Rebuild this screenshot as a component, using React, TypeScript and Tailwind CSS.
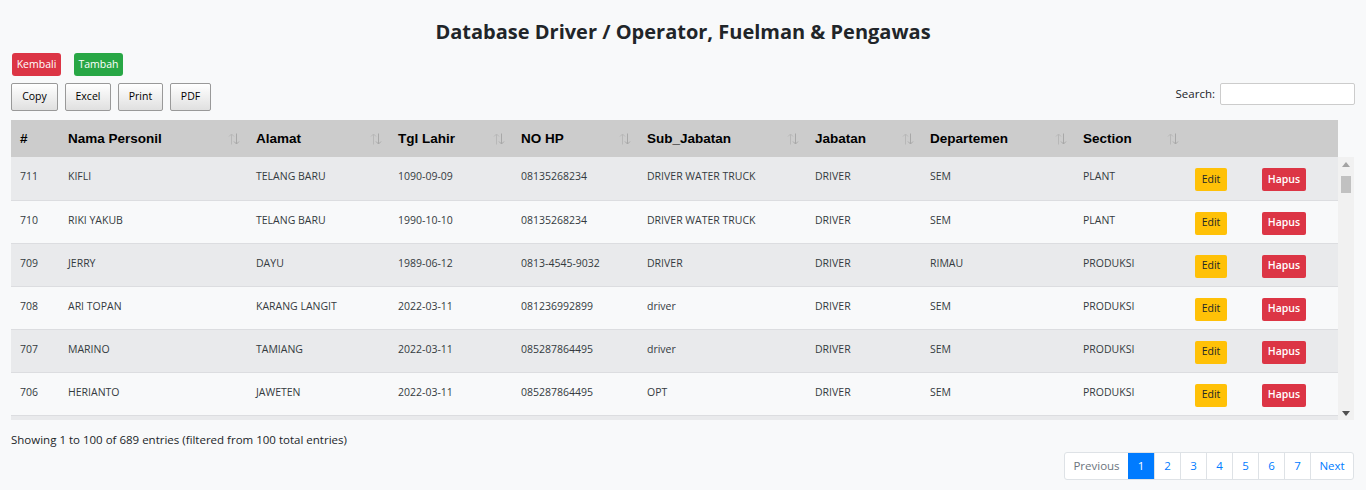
import React from "react";

type Row = {
  id: number;
  nama: string;
  alamat: string;
  lahir: string;
  hp: string;
  sub: string;
  jabatan: string;
  dept: string;
  section: string;
};

const rows: Row[] = [
  { id: 711, nama: "KIFLI", alamat: "TELANG BARU", lahir: "1090-09-09", hp: "08135268234", sub: "DRIVER WATER TRUCK", jabatan: "DRIVER", dept: "SEM", section: "PLANT" },
  { id: 710, nama: "RIKI YAKUB", alamat: "TELANG BARU", lahir: "1990-10-10", hp: "08135268234", sub: "DRIVER WATER TRUCK", jabatan: "DRIVER", dept: "SEM", section: "PLANT" },
  { id: 709, nama: "JERRY", alamat: "DAYU", lahir: "1989-06-12", hp: "0813-4545-9032", sub: "DRIVER", jabatan: "DRIVER", dept: "RIMAU", section: "PRODUKSI" },
  { id: 708, nama: "ARI TOPAN", alamat: "KARANG LANGIT", lahir: "2022-03-11", hp: "081236992899", sub: "driver", jabatan: "DRIVER", dept: "SEM", section: "PRODUKSI" },
  { id: 707, nama: "MARINO", alamat: "TAMIANG", lahir: "2022-03-11", hp: "085287864495", sub: "driver", jabatan: "DRIVER", dept: "SEM", section: "PRODUKSI" },
  { id: 706, nama: "HERIANTO", alamat: "JAWETEN", lahir: "2022-03-11", hp: "085287864495", sub: "OPT", jabatan: "DRIVER", dept: "SEM", section: "PRODUKSI" },
];

const widths = [48, 188, 142, 123, 126, 168, 115, 153, 112, 67, 85];
const headers = ["#", "Nama Personil", "Alamat", "Tgl Lahir", "NO HP", "Sub_Jabatan", "Jabatan", "Departemen", "Section", "", ""];

function Cols() {
  return (
    <colgroup>
      {widths.map((w, i) => (
        <col key={i} style={{ width: w }} />
      ))}
    </colgroup>
  );
}

function SortIcon() {
  return (
    <svg width="12" height="12" viewBox="0 0 12 12" fill="none" strokeWidth="1" className="shrink-0">
      <path d="M3.5 11.5 V1 M1 3.5 L3.5 1 L6 3.5" stroke="#b8b8b8" />
      <path d="M8.5 0.5 V11 M6 8.5 L8.5 11 L11 8.5" stroke="#a8a8a8" />
    </svg>
  );
}

const font = { fontFamily: '"Open Sans", "Noto Sans", sans-serif' };

export default function App() {
  return (
    <div className="min-h-[490px] bg-[#f8f9fa] text-[#212529] px-[11px]" style={font}>
      <h1 className="pt-[18px] text-center text-[20px] font-bold leading-[28px] text-[#212529]">
        Database Driver / Operator, Fuelman &amp; Pengawas
      </h1>

      <div className="mt-[7px] flex gap-[13px] pl-px">
        <button className="h-[23px] w-[49px] rounded-[3px] bg-[#dc3545] text-[10.5px] text-white">Kembali</button>
        <button className="h-[23px] w-[49px] rounded-[3px] bg-[#28a745] text-[10.5px] text-white">Tambah</button>
      </div>

      <div className="mt-[7px] flex items-end justify-between">
        <div className="flex gap-[7px]">
          {[["Copy", 47], ["Excel", 46], ["Print", 45], ["PDF", 41]].map(([t, w]) => (
            <button
              key={t as string}
              style={{ width: w as number }}
              className="h-[28px] rounded-[2px] border border-[#999] bg-gradient-to-b from-white to-[#e0e0e0] text-[10.5px] text-black"
            >
              {t}
            </button>
          ))}
        </div>
        <label className="flex items-center gap-[5px] pb-[6px] text-[11.5px] text-[#212529]">
          Search:
          <input className="h-[22px] w-[135px] rounded-[2px] border border-[#ccc] bg-white" />
        </label>
      </div>

      <div className="mt-[9px] w-[1343px]">
        <table className="w-[1327px] table-fixed border-collapse" style={{ fontFamily: '"Liberation Sans", Arial, sans-serif' }}>
          <Cols />
          <thead>
            <tr className="h-[37px] bg-[#cccccc]">
              {headers.map((h, i) => (
                <th key={i} className="pl-[9px] pt-px text-left text-[13.5px] font-bold text-black">
                  <div className="flex items-center justify-between pr-[7px]">
                    <span>{h}</span>
                    {i > 0 && i < 9 && <SortIcon />}
                  </div>
                </th>
              ))}
            </tr>
          </thead>
        </table>
        <div className="flex h-[263px]">
          <div className="w-[1327px] overflow-hidden bg-[#e9eaec]">
            <table className="w-[1327px] table-fixed border-collapse text-[10.5px]">
              <Cols />
              <tbody>
                {rows.map((r, i) => (
                  <tr key={r.id} className={`${i % 2 === 0 ? "bg-[#e9eaec]" : "bg-[#f8f9fa]"} border-b border-[#dcdde0]`}>
                    {[r.id, r.nama, r.alamat, r.lahir, r.hp, r.sub, r.jabatan, r.dept, r.section].map((v, j) => (
                      <td key={j} className="h-[43px] pl-[9px] pt-[11px] align-top leading-[16px] text-[#343a40]">
                        {v}
                      </td>
                    ))}
                    <td className="pl-[9px] pt-[11px] align-top">
                      <button className="h-[23px] w-[32px] rounded-[2px] bg-[#ffc107] text-[10.5px] text-[#212529]">Edit</button>
                    </td>
                    <td className="pl-[9px] pt-[11px] align-top">
                      <button className="h-[23px] w-[44px] rounded-[2px] bg-[#dc3545] text-[10.5px] font-semibold text-white">Hapus</button>
                    </td>
                  </tr>
                ))}
              </tbody>
            </table>
          </div>
          {/* scrollbar */}
          <div className="flex w-[16px] flex-col items-center bg-[#f1f1f1] pt-[3px] pb-[4px]">
            <svg width="8" height="5" viewBox="0 0 8 5" className="mt-[2px]">
              <path d="M0 5 L4 0 L8 5 Z" fill="#a3a3a3" />
            </svg>
            <div className="mt-[9px] h-[17px] w-[10px] bg-[#c1c1c1]" />
            <div className="flex-1" />
            <svg width="8" height="5" viewBox="0 0 8 5">
              <path d="M0 0 L4 5 L8 0 Z" fill="#505050" />
            </svg>
          </div>
        </div>
      </div>

      <div className="mt-[12px] text-[11.5px] leading-[16px] text-[#212529]">
        Showing 1 to 100 of 689 entries (filtered from 100 total entries)
      </div>

      <div className="mt-[4px] flex justify-end pr-px">
        <div className="flex h-[28px] overflow-hidden rounded-[3px] border border-[#dee2e6] bg-white text-[11.5px]">
          <span className="flex w-[63px] items-center justify-center text-[#6c757d]">Previous</span>
          <span className="flex w-[26px] items-center justify-center bg-[#007bff] text-white">1</span>
          {["2", "3", "4", "5", "6", "7"].map((p) => (
            <span key={p} className="flex w-[26px] items-center justify-center border-l border-[#dee2e6] text-[#007bff]">
              {p}
            </span>
          ))}
          <span className="flex w-[43px] items-center justify-center border-l border-[#dee2e6] text-[#007bff]">Next</span>
        </div>
      </div>
    </div>
  );
}
